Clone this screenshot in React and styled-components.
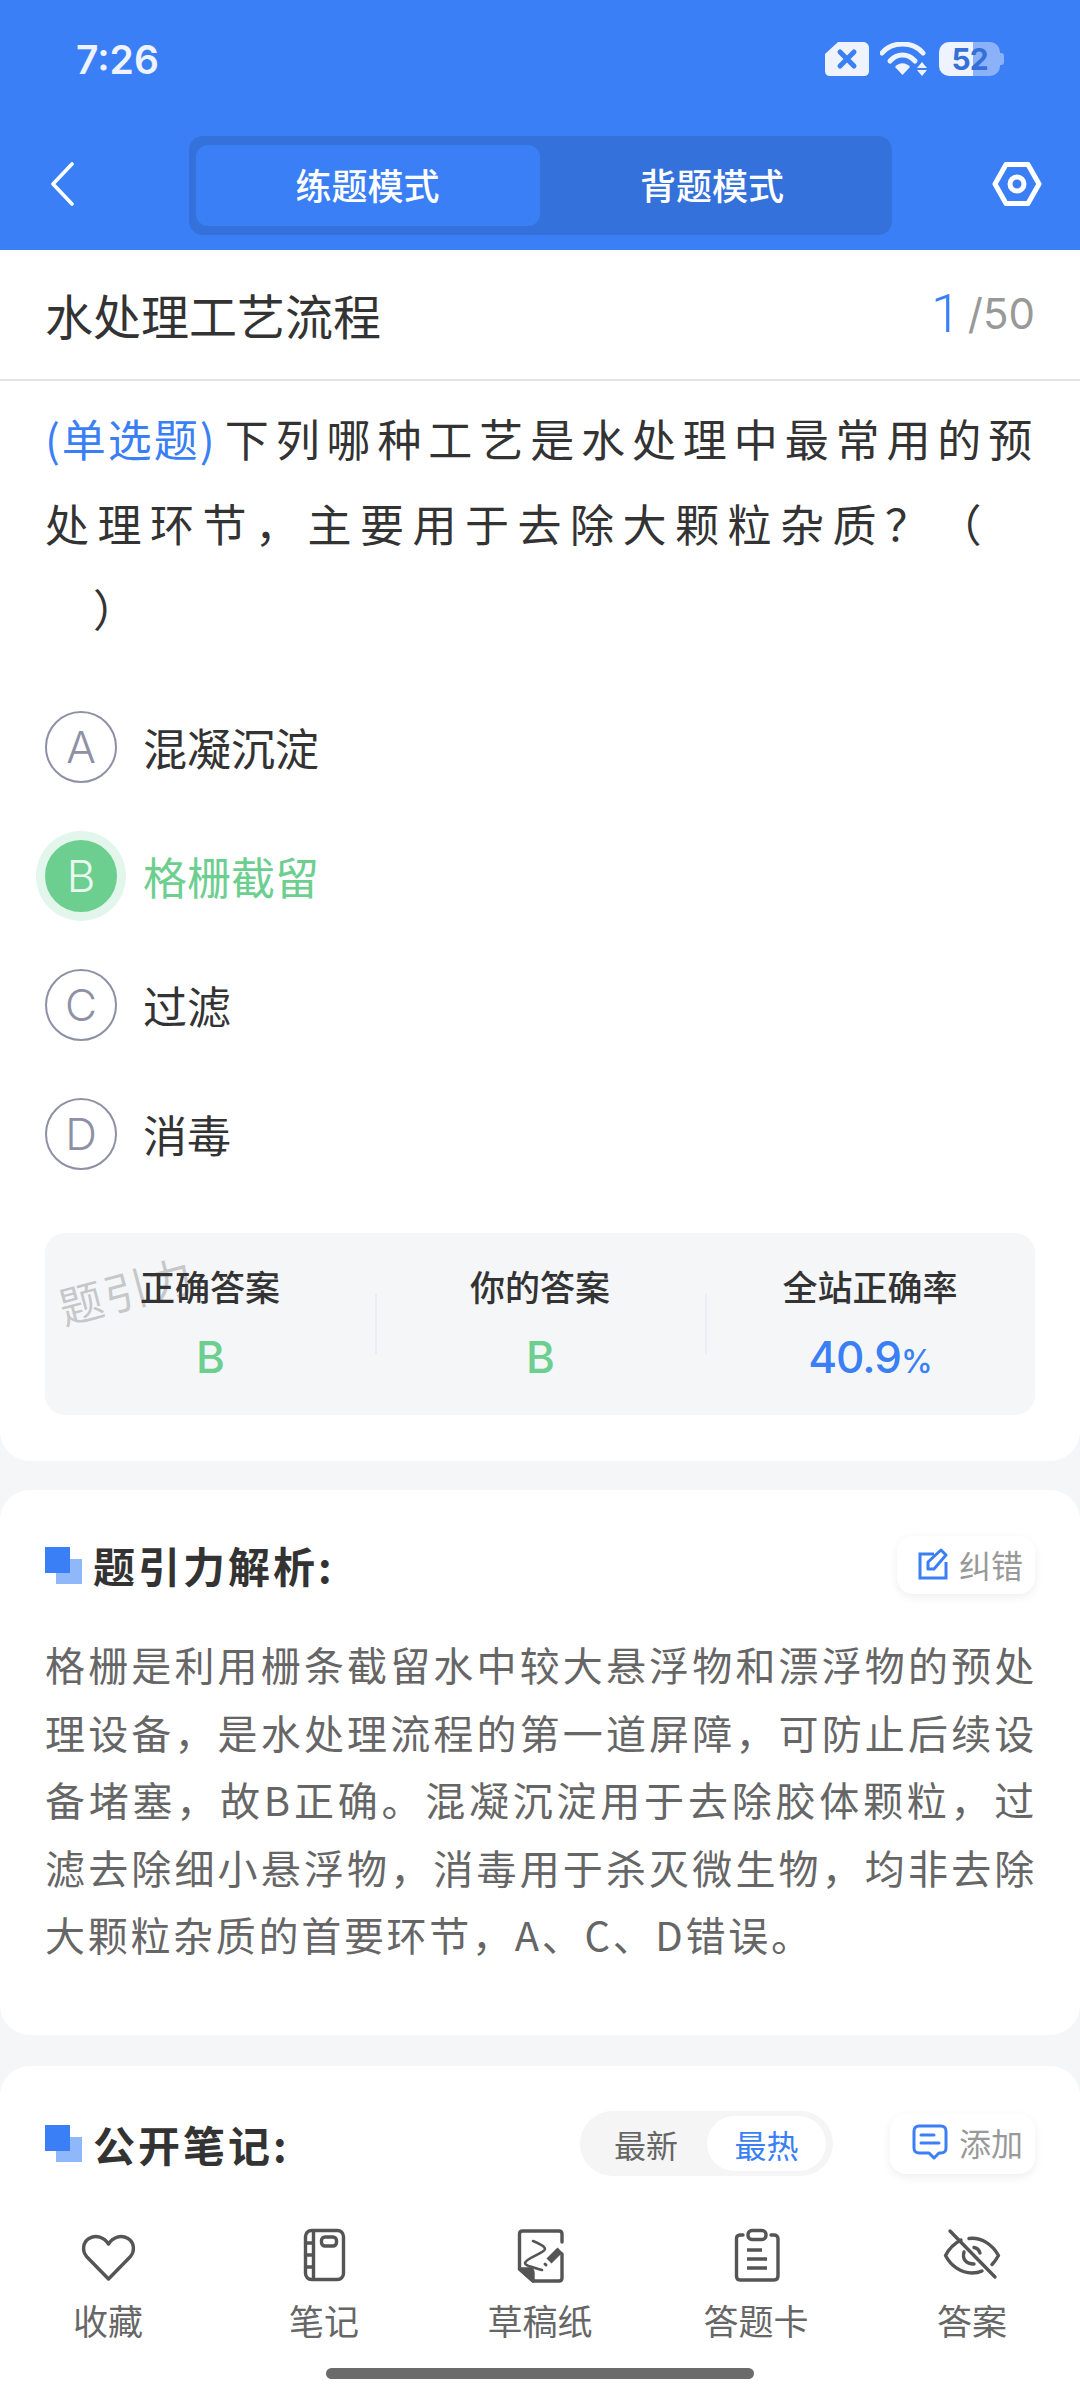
import React from "react"
import styled, { createGlobalStyle } from "styled-components"

const BLUE = "#3b7ff6"
const GREEN = "#6dcf8f"
const CJK = `"Noto Sans CJK SC", "Noto Sans", sans-serif`

const GlobalStyle = createGlobalStyle`
  html, body {
    margin: 0;
    padding: 0;
    background: #f4f6f8;
  }
  * {
    box-sizing: border-box;
  }
`

const Page = styled.div`
  width: 1080px;
  height: 2400px;
  display: flex;
  flex-direction: column;
  overflow: hidden;
  background: #f4f6f8;
  font-family: ${CJK};
  color: #333;
`

const Header = styled.header`
  flex: none;
  height: 250px;
  background: ${BLUE};
  padding-top: 42px;
`

const StatusBar = styled.div`
  height: 34px;
  padding: 0 80px 0 76px;
  display: flex;
  align-items: center;
  justify-content: space-between;
`

const Time = styled.span`
  font-family: Inter, sans-serif;
  font-size: 39px;
  font-weight: 600;
  color: #eef3fe;
`

const StatusIcons = styled.div`
  display: flex;
  align-items: center;
  gap: 11px;
`

const Battery = styled.div`
  position: relative;
  width: 61px;
  height: 34px;
  border-radius: 10px;
  background: linear-gradient(to right, #eef3fe 0 34px, #8bb2f9 34px);
  display: flex;
  align-items: center;
  justify-content: center;
  font-family: Inter, sans-serif;
  font-size: 30px;
  font-weight: 700;
  letter-spacing: -1px;
  color: #3570d8;

  &::after {
    content: "";
    position: absolute;
    right: -4px;
    top: 11px;
    width: 4px;
    height: 12px;
    border-radius: 0 3px 3px 0;
    background: #8bb2f9;
  }
`

const NavRow = styled.div`
  margin-top: 60px;
  display: grid;
  grid-template-columns: 1fr 703px 1fr;
  align-items: center;
`

const NavSide = styled.div`
  display: flex;
  justify-content: ${p => (p.$end ? "flex-end" : "flex-start")};
  padding: 0 ${p => (p.$end ? "38px" : "0")} 3px ${p => (p.$end ? "0" : "50px")};
`

const ModeSwitch = styled.div`
  height: 99px;
  padding: 9px 7px;
  border-radius: 14px;
  background: #3571da;
  display: grid;
  grid-template-columns: 344px 1fr;
`

const ModeTab = styled.div`
  border-radius: 12px;
  background: ${p => (p.$active ? BLUE : "transparent")};
  color: #fff;
  font-size: 36px;
  font-weight: 500;
  padding-bottom: 3px;
  display: flex;
  align-items: center;
  justify-content: center;
`

const Card = styled.section`
  flex: none;
  background: #fff;
  border-radius: ${p => (p.$top ? "0 0 30px 30px" : "30px")};
  margin-bottom: ${p => p.$gap || 29}px;
`

const QuestionCard = styled(Card)`
  height: 1211px;
`

const ChapterRow = styled.div`
  height: 131px;
  padding: 0 45px 2px;
  border-bottom: 2px solid #e3e3e3;
  display: flex;
  align-items: center;
  justify-content: space-between;
`

const ChapterName = styled.div`
  font-size: 48px;
  color: #333;
`

const Counter = styled.div`
  font-family: Inter, sans-serif;
  font-size: 42px;
  color: #999;
  display: flex;
  align-items: center;
  gap: 7px;
`

const CounterNow = styled.span`
  font-family: Roboto, sans-serif;
  font-size: 54px;
  font-weight: 300;
  color: ${BLUE};
`

const Question = styled.div`
  padding: 15px 45px 0;
  font-size: 44px;
  line-height: 85px;
  color: #333;
`

const QuestionLine = styled.div`
  white-space: pre;
  letter-spacing: ${p => p.$spacing || 0}px;
  padding-left: ${p => p.$indent || 0}px;
`

const QuestionType = styled.span`
  color: ${BLUE};
  letter-spacing: 2px;
  margin-right: 8px;
`

const OptionList = styled.div`
  margin-top: 60px;
  display: flex;
  flex-direction: column;
  gap: 57px;
  padding: 0 45px;
`

const Option = styled.div`
  height: 72px;
  display: flex;
  align-items: center;
  gap: 26px;
  font-size: 44px;
  color: ${p => (p.$picked ? GREEN : "#333")};
`

const OptionLetter = styled.span`
  flex: none;
  width: 72px;
  height: 72px;
  border-radius: 50%;
  border: 2px solid ${p => (p.$picked ? GREEN : "#8e90a5")};
  background: ${p => (p.$picked ? GREEN : "transparent")};
  box-shadow: ${p => (p.$picked ? "0 0 0 9px #e2f6ec" : "none")};
  color: ${p => (p.$picked ? "#e9f9ef" : "#8e90a5")};
  font-family: Inter, sans-serif;
  font-size: 44px;
  font-weight: 300;
  display: flex;
  align-items: center;
  justify-content: center;
`

const AnswerPanel = styled.div`
  position: relative;
  margin: 63px 45px 0;
  height: 182px;
  padding-top: 28px;
  border-radius: 20px;
  background: #f4f6f8;
  display: grid;
  grid-template-columns: repeat(3, 1fr);
`

const Watermark = styled.div`
  position: absolute;
  left: 12px;
  top: 24px;
  font-size: 44px;
  letter-spacing: 2px;
  color: rgba(0, 0, 0, 0.2);
  transform: rotate(-15deg);
`

const AnswerCol = styled.div`
  position: relative;
  display: flex;
  flex-direction: column;
  align-items: center;
  gap: 18px;

  & + &::before {
    content: "";
    position: absolute;
    left: 0;
    top: 33px;
    height: 60px;
    border-left: 2px solid #ebedf0;
  }
`

const AnswerLabel = styled.div`
  font-size: 35px;
  line-height: 50px;
  font-weight: 500;
  color: #333;
`

const AnswerValue = styled.div`
  font-family: Inter, sans-serif;
  font-size: 44px;
  line-height: 56px;
  font-weight: 500;
  letter-spacing: -1px;
  color: ${p => p.$color};

  small {
    font-size: 32px;
  }
`

const SectionHead = styled.div`
  display: flex;
  align-items: center;
  justify-content: space-between;
`

const SectionTitle = styled.h2`
  margin: 0;
  display: flex;
  align-items: center;
  gap: 11px;
  font-size: 42px;
  line-height: 1;
  font-weight: 600;
  letter-spacing: 3px;
  color: #333;
`

const SquareMark = styled.span`
  position: relative;
  width: 37px;
  height: 37px;
  flex: none;
  background: linear-gradient(#8fb8fa, #8fb8fa) 11px 12px / 26px 25px no-repeat;

  &::before {
    content: "";
    position: absolute;
    left: 0;
    top: 0;
    width: 25px;
    height: 26px;
    background: ${BLUE};
  }
`

const ChipButton = styled.div`
  height: ${p => p.$h}px;
  padding: 0 0 3px ${p => p.$pad}px;
  width: ${p => p.$w}px;
  border-radius: 16px;
  background: #fff;
  box-shadow: 0 3px 10px rgba(0, 0, 0, 0.07);
  display: flex;
  align-items: center;
  gap: 11px;
  font-size: 32px;
  color: #999;
`

const Analysis = styled.p`
  margin: 37px 0 0;
  font-size: 40px;
  line-height: 67.5px;
  letter-spacing: 2.7px;
  text-align: justify;
  color: #666;
  width: 992px;
`

const AnalysisCard = styled(Card)`
  height: 545px;
  padding: 46px 45px 0;
`

const NotesCard = styled(Card)`
  flex: 1;
  margin-bottom: 0;
  border-radius: 30px 30px 0 0;
  padding: 45px 45px 0;
`

const NotesTools = styled.div`
  display: flex;
  align-items: center;
  gap: 57px;
`

const SortPill = styled.div`
  width: 253px;
  height: 65px;
  padding: 5px 7px 5px 5px;
  border-radius: 33px;
  background: #f5f5f5;
  display: grid;
  grid-template-columns: 1fr 119px;
`

const SortTab = styled.div`
  border-radius: 28px;
  background: ${p => (p.$active ? "#fff" : "transparent")};
  color: ${p => (p.$active ? BLUE : "#666")};
  font-size: 32px;
  display: flex;
  align-items: center;
  justify-content: center;
`

const TabBar = styled.nav`
  flex: none;
  height: 200px;
  background: #fff;
  position: relative;
  display: grid;
  grid-template-columns: repeat(5, 216px);
  padding-top: 26px;
`

const TabItem = styled.div`
  display: flex;
  flex-direction: column;
  align-items: center;
  gap: 8px;
  font-size: 35px;
  line-height: 52px;
  color: #666;
`

const HomeBar = styled.div`
  position: absolute;
  left: 326px;
  top: 168px;
  width: 428px;
  height: 11px;
  border-radius: 6px;
  background: #6b6b6b;
`

const TabIcon = ({ children }) => (
  <svg width="60" height="60" viewBox="0 0 60 60" fill="none" stroke="#555" strokeWidth="3.4" strokeLinecap="round" strokeLinejoin="round">
    {children}
  </svg>
)

const HeartIcon = () => (
  <TabIcon>
    <path d="M30.5 53 L9 31 C3.5 25 5 16 11 12.5 C18 8.5 26 11 30.5 18 C35 11 43 8.5 50 12.5 C56 16 57.5 25 52 31 Z" />
  </TabIcon>
)

const NotebookIcon = () => (
  <TabIcon>
    <rect x="11.5" y="4.5" width="38" height="49" rx="6" />
    <path d="M19.5 5 V53 M11.5 17 H19.5 M11.5 29 H19.5 M11.5 41 H19.5" />
    <rect x="27.5" y="11" width="15" height="9" rx="3.5" />
  </TabIcon>
)

const DraftIcon = () => (
  <TabIcon>
    <path d="M52 28 V52 C52 54 51 55 49 55 H23 L9.5 43 V8 C9.5 6 10.5 5 12.5 5 H49 C51 5 52 6 52 8 V16" />
    <path d="M9.5 43 H20 C22 43 23 45 23 47 V55 Z" fill="#555" />
    <path d="M23 15 C28 17 35 20 35 23 C35 27 16 32 15 37 C15 40 26 42 32 44" strokeWidth="2.6" />
    <path d="M50 24 L39 35" strokeWidth="7" strokeLinecap="butt" />
    <path d="M36 39 L35 38" strokeWidth="3" />
  </TabIcon>
)

const ClipboardIcon = () => (
  <TabIcon>
    <path d="M17 9 H14 C11.5 9 10.5 10.5 10.5 12.5 V50 C10.5 52.5 12 54 14 54 H48 C50.5 54 52 52.5 52 50 V12.5 C52 10.5 50.5 9 48 9 H45" />
    <rect x="22" y="4.5" width="18" height="9" rx="4" />
    <path d="M21 24 H36 M21 33 H41 M21 42 H41" strokeLinecap="butt" />
  </TabIcon>
)

const EyeOffIcon = () => (
  <TabIcon>
    <path d="M19 14 C13 17 7 23 3.5 29.5 C9 40 19 47 30 47 C34 47 37 46.5 40 45" />
    <path d="M27 12.5 C39 11 50 18 56.5 29.5 C54.5 33 52.5 36 50 38.5" />
    <path d="M22 26 C20 33 24 38 32 38" />
    <path d="M32 21.5 C35 22 37 24 38 27" />
    <path d="M8 5 L53 51" />
  </TabIcon>
)

const BackIcon = () => (
  <svg width="24" height="44" viewBox="0 0 24 44" fill="none" stroke="#fff" strokeWidth="3.6" strokeLinecap="round" strokeLinejoin="round">
    <path d="M22 2 L3 22 L22 42" />
  </svg>
)

const SettingIcon = () => (
  <svg width="50" height="46" viewBox="0 0 50 46" fill="none" stroke="#fff" strokeWidth="5" strokeLinejoin="round">
    <path d="M14 3.5 H36 L47 23 L36 42.5 H14 L3 23 Z" />
    <circle cx="25" cy="23" r="7" />
  </svg>
)

const SimIcon = () => (
  <svg width="44" height="34" viewBox="0 0 44 34">
    <path d="M13 0 H38 C41.5 0 44 2.5 44 6 V29 C44 32 42 34 39 34 H5 C2 34 0 32 0 29 V12 Z" fill="#eef3fe" />
    <path d="M15 10 L29 24 M29 10 L15 24" stroke="#3b7ff6" strokeWidth="5" strokeLinecap="round" />
  </svg>
)

const WifiIcon = () => (
  <svg width="48" height="34" viewBox="0 0 48 34" fill="none">
    <path d="M2 11 C12 -1 33 -1 43 11" stroke="#eef3fe" strokeWidth="5" strokeLinecap="round" />
    <path d="M10 19 C17 11 28 11 35 19" stroke="#eef3fe" strokeWidth="5" strokeLinecap="round" />
    <path d="M15 25 C19 20 26 20 30 25 L22.5 33 Z" fill="#eef3fe" />
    <path d="M42 20 L47 26 H37 Z M37 28 H47 L42 34 Z" fill="#eef3fe" />
  </svg>
)

const FixIcon = () => (
  <svg width="30" height="32" viewBox="0 0 30 32" fill="none" stroke={BLUE} strokeWidth="3">
    <path d="M16 6 H2 V30 H28 V14" />
    <path d="M10 21 V14 L23 2 L28 7 L16 21 Z" strokeLinejoin="round" />
  </svg>
)

const AddNoteIcon = () => (
  <svg width="36" height="36" viewBox="0 0 36 36" fill="none" stroke={BLUE} strokeWidth="3" strokeLinecap="round" strokeLinejoin="round">
    <path d="M7 2 H29 C32 2 34 4 34 7 V24 C34 27 32 29 29 29 H27 L22 34 L17 29 H7 C4 29 2 27 2 24 V7 C2 4 4 2 7 2 Z" />
    <path d="M9 11 H22 M9 19 H27" />
  </svg>
)

const options = [
  { key: "A", text: "混凝沉淀" },
  { key: "B", text: "格栅截留", picked: true },
  { key: "C", text: "过滤" },
  { key: "D", text: "消毒" },
]

const tabs = [
  { label: "收藏", icon: <HeartIcon /> },
  { label: "笔记", icon: <NotebookIcon /> },
  { label: "草稿纸", icon: <DraftIcon /> },
  { label: "答题卡", icon: <ClipboardIcon /> },
  { label: "答案", icon: <EyeOffIcon /> },
]

const App = () => {
  return (
    <Page>
      <GlobalStyle />
      <Header>
        <StatusBar>
          <Time>7:26</Time>
          <StatusIcons>
            <SimIcon />
            <WifiIcon />
            <Battery>52</Battery>
          </StatusIcons>
        </StatusBar>
        <NavRow>
          <NavSide>
            <BackIcon />
          </NavSide>
          <ModeSwitch>
            <ModeTab $active>练题模式</ModeTab>
            <ModeTab>背题模式</ModeTab>
          </ModeSwitch>
          <NavSide $end>
            <SettingIcon />
          </NavSide>
        </NavRow>
      </Header>

      <QuestionCard $top>
        <ChapterRow>
          <ChapterName>水处理工艺流程</ChapterName>
          <Counter>
            <CounterNow>1</CounterNow>/50
          </Counter>
        </ChapterRow>
        <Question>
          <QuestionLine $spacing={6.9}>
            <QuestionType>(单选题)</QuestionType>下列哪种工艺是水处理中最常用的预
          </QuestionLine>
          <QuestionLine $spacing={8.5}>处理环节，主要用于去除大颗粒杂质？（</QuestionLine>
          <QuestionLine $indent={48}>）</QuestionLine>
        </Question>
        <OptionList>
          {options.map(o => (
            <Option key={o.key} $picked={o.picked}>
              <OptionLetter $picked={o.picked}>{o.key}</OptionLetter>
              {o.text}
            </Option>
          ))}
        </OptionList>
        <AnswerPanel>
          <Watermark>题引力</Watermark>
          <AnswerCol>
            <AnswerLabel>正确答案</AnswerLabel>
            <AnswerValue $color={GREEN}>B</AnswerValue>
          </AnswerCol>
          <AnswerCol>
            <AnswerLabel>你的答案</AnswerLabel>
            <AnswerValue $color={GREEN}>B</AnswerValue>
          </AnswerCol>
          <AnswerCol>
            <AnswerLabel>全站正确率</AnswerLabel>
            <AnswerValue $color={BLUE}>
              40.9<small>%</small>
            </AnswerValue>
          </AnswerCol>
        </AnswerPanel>
      </QuestionCard>

      <AnalysisCard $gap={31}>
        <SectionHead>
          <SectionTitle>
            <SquareMark />
            题引力解析:
          </SectionTitle>
          <ChipButton $w={138} $h={58} $pad={21}>
            <FixIcon />
            纠错
          </ChipButton>
        </SectionHead>
        <Analysis>
          格栅是利用栅条截留水中较大悬浮物和漂浮物的预处理设备，是水处理流程的第一道屏障，可防止后续设备堵塞，故B正确。混凝沉淀用于去除胶体颗粒，过滤去除细小悬浮物，消毒用于杀灭微生物，均非去除大颗粒杂质的首要环节，A、C、D错误。
        </Analysis>
      </AnalysisCard>

      <NotesCard>
        <SectionHead>
          <SectionTitle>
            <SquareMark />
            公开笔记:
          </SectionTitle>
          <NotesTools>
            <SortPill>
              <SortTab>最新</SortTab>
              <SortTab $active>最热</SortTab>
            </SortPill>
            <ChipButton $w={145} $h={60} $pad={22}>
              <AddNoteIcon />
              添加
            </ChipButton>
          </NotesTools>
        </SectionHead>
      </NotesCard>

      <TabBar>
        {tabs.map(t => (
          <TabItem key={t.label}>
            {t.icon}
            {t.label}
          </TabItem>
        ))}
        <HomeBar />
      </TabBar>
    </Page>
  )
}

export default App
